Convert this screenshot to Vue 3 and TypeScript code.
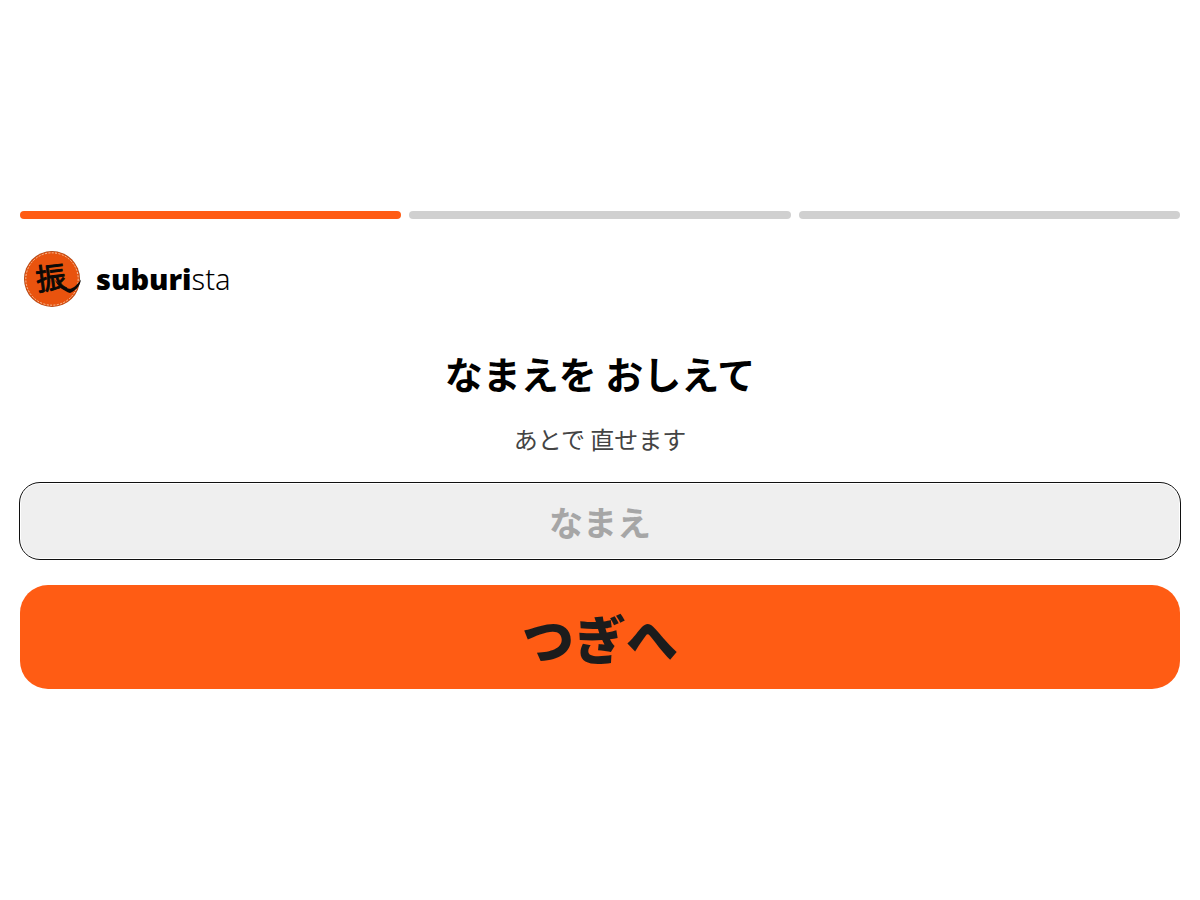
<script setup lang="ts">
import { onMounted, ref } from 'vue'

const steps = 3
const current = ref<number>(1)
const name = ref<string>('')
const field = ref<HTMLInputElement | null>(null)

function next(): void {
  if (current.value < steps) current.value += 1
}

onMounted(() => field.value?.focus())
</script>

<template>
  <main class="page">
    <div
      class="progress"
      role="progressbar"
      aria-valuemin="1"
      :aria-valuemax="steps"
      :aria-valuenow="current"
    >
      <span v-for="n in steps" :key="n" class="segment" :class="{ done: n <= current }"></span>
    </div>

    <header class="brand">
      <svg class="mark" viewBox="0 0 60 56" aria-hidden="true">
        <circle cx="28" cy="28" r="28" fill="#a94a1c" />
        <circle cx="28" cy="28" r="27.3" fill="#e9530e" />
        <circle
          cx="28"
          cy="28"
          r="26.2"
          fill="none"
          stroke="#f3cdb0"
          stroke-width="0.9"
          stroke-dasharray="2 1.4"
        />
        <text class="kanji" x="27" y="38" text-anchor="middle" transform="rotate(-7 27 28)">振</text>
        <path
          d="M31 29C35 33 40 36.500 45 37.800C49 38 53 34 57 28.500C56 35 52 39.500 46 42C40 40 34 36 31 29Z"
          fill="#0b0907"
        />
      </svg>
      <p class="wordmark"><b>suburi</b>sta</p>
    </header>

    <form class="form" @submit.prevent="next">
      <h1 class="title"><label for="name">なまえを おしえて</label></h1>
      <p class="hint">あとで 直せます</p>
      <input id="name" ref="field" v-model="name" class="field" type="text" placeholder="なまえ" autocomplete="off" />
      <button class="next" type="submit">つぎへ</button>
    </form>
  </main>
</template>

<style>
body {
  margin: 0;
  background: #fff;
}
</style>

<style scoped>
.page {
  box-sizing: border-box;
  min-height: 100vh;
  padding: 20px;
  display: flex;
  flex-direction: column;
  justify-content: center;
  color: #000;
  font-family: "Noto Sans CJK JP", sans-serif;
}
.progress {
  display: flex;
  gap: 8px;
}
.segment {
  flex: 1;
  height: 8px;
  border-radius: 4px;
  background: #d0d0d0;
}
.segment.done {
  background: #ff5c14;
}
.brand {
  display: flex;
  align-items: center;
  gap: 12px;
  margin-top: 32px;
  padding-left: 4px;
}
.mark {
  width: 60px;
  height: 56px;
  overflow: visible;
}
.kanji {
  font-family: "Noto Sans CJK JP", sans-serif;
  font-size: 30px;
  font-weight: 400;
  fill: #0b0907;
  stroke: #0b0907;
  stroke-width: 0.9;
  stroke-linejoin: round;
}
.wordmark {
  margin: 0;
  font: 300 29px/40px "Noto Sans", sans-serif;
}
.wordmark b {
  font-weight: 900;
}
.form {
  display: flex;
  flex-direction: column;
  margin-top: 38px;
  text-align: center;
}
.title {
  margin: 0;
  font-size: 38px;
  line-height: 56px;
  font-weight: 700;
}
.hint {
  margin: 20px 0 0;
  font-size: 24px;
  line-height: 36px;
  color: #444;
}
.field {
  box-sizing: border-box;
  width: 100%;
  height: 76px;
  margin-top: 26px;
  padding: 0 20px;
  border: 1px solid #fff;
  border-radius: 20px;
  outline: 1px solid #101010;
  background: #efefef;
  color: #1c1c1c;
  font-family: inherit;
  font-size: 34px;
  font-weight: 700;
  text-align: center;
}
.field::placeholder {
  color: #a6a6a6;
  opacity: 1;
}
.next {
  height: 104px;
  margin-top: 26px;
  border: 0;
  border-radius: 28px;
  background: #ff5c14;
  color: #1c1c1c;
  font-family: inherit;
  font-size: 52px;
  font-weight: 900;
  cursor: pointer;
}
</style>
